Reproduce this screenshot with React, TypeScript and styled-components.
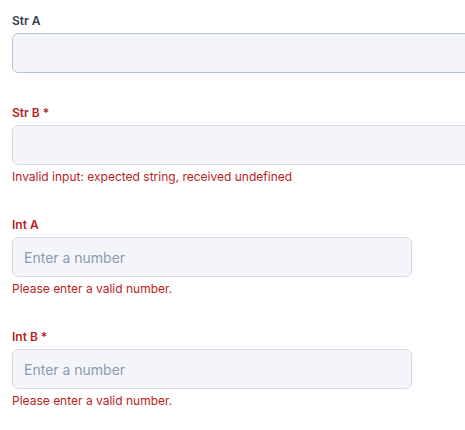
import styled, { createGlobalStyle } from 'styled-components';

const GlobalStyle = createGlobalStyle`
    body {
        margin: 0;
        background: #ffffff;
        font-family: Inter, "Noto Sans", sans-serif;
        -webkit-font-smoothing: antialiased;
    }
`;

const FormWrapper = styled.div`
    display: flex;
    flex-direction: column;
    gap: 30px;
    padding: 11px 0 0 12px;
    overflow: hidden;
`;

const Field = styled.div`
    display: flex;
    flex-direction: column;
`;

const Label = styled.label<{ $invalid?: boolean }>`
    font-size: 12px;
    line-height: 20px;
    font-weight: 600;
    color: ${(p) => (p.$invalid ? '#b91c1c' : '#334155')};
    margin-bottom: 2px;
`;

const Input = styled.input<{ $wide?: boolean; $active?: boolean }>`
    box-sizing: border-box;
    width: ${(p) => (p.$wide ? '520px' : '400px')};
    height: 40px;
    padding: 0 11px;
    border: 1px solid ${(p) => (p.$active ? '#b6c4d8' : '#d3dbe6')};
    border-radius: 6px;
    background: #f3f5f9;
    font-family: Inter, "Noto Sans", sans-serif;
    font-size: 14px;
    color: #1e293b;
    outline: none;

    &::placeholder {
        color: #8b9bb0;
    }
`;

const ErrorText = styled.div`
    font-size: 12px;
    line-height: 16px;
    color: #b91c1c;
    margin-top: 4px;
`;

const fields = [
    { label: 'Str A', required: false, wide: true, active: true, error: '' },
    { label: 'Str B', required: true, wide: true, error: 'Invalid input: expected string, received undefined' },
    { label: 'Int A', required: false, number: true, error: 'Please enter a valid number.' },
    { label: 'Int B', required: true, number: true, error: 'Please enter a valid number.' },
];

const App = () => {
    return (
        <>
            <GlobalStyle />
            <FormWrapper>
                {fields.map((f) => (
                    <Field key={f.label}>
                        <Label $invalid={!!f.error}>
                            {f.label}
                            {f.required && ' *'}
                        </Label>
                        <Input
                            $wide={f.wide}
                            $active={f.active}
                            placeholder={f.number ? 'Enter a number' : ''}
                            inputMode={f.number ? 'decimal' : undefined}
                        />
                        {f.error && <ErrorText>{f.error}</ErrorText>}
                    </Field>
                ))}
            </FormWrapper>
        </>
    );
};

export default App;
